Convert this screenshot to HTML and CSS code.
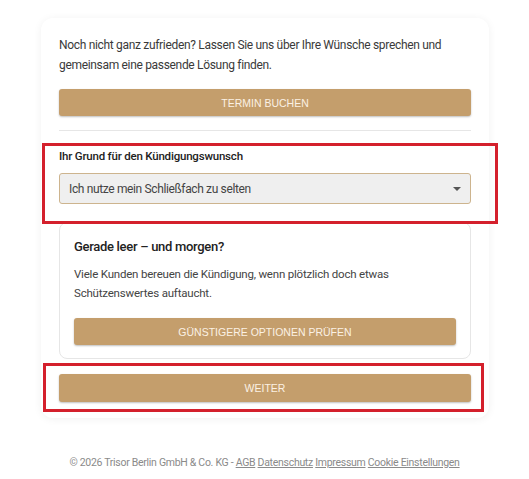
FILE: index.html
```html
<!DOCTYPE html>
<html>

<head>
    <link rel="stylesheet" href="styles.css">
    <title>Kündigung</title>
</head>

<body>
    <div id="page-wrapper">
        <div class="card">
            <p class="intro">Noch nicht ganz zufrieden? Lassen Sie uns über Ihre Wünsche sprechen und gemeinsam eine passende Lösung finden.</p>
            <button class="btn">TERMIN BUCHEN</button>
            <hr class="divider">

            <div class="field">
                <label class="field-label" for="grund">Ihr Grund für den Kündigungswunsch</label>
                <div class="select">
                    <span>Ich nutze mein Schließfach zu selten</span>
                    <span class="caret"></span>
                </div>
                <div class="mark mark-field"></div>
            </div>

            <div class="offer">
                <h4>Gerade leer – und morgen?</h4>
                <p>Viele Kunden bereuen die Kündigung, wenn plötzlich doch etwas Schützenswertes auftaucht.</p>
                <button class="btn">GÜNSTIGERE OPTIONEN PRÜFEN</button>
            </div>

            <div class="next">
                <button class="btn">WEITER</button>
                <div class="mark mark-next"></div>
            </div>
        </div>

        <footer class="footer">
            © 2026 Trisor Berlin GmbH &amp; Co. KG - <a href="#">AGB</a> <a href="#">Datenschutz</a> <a href="#">Impressum</a> <a href="#">Cookie Einstellungen</a>
        </footer>
    </div>
</body>

</html>
```

FILE: styles.css
```css
html {
    font-family: Roboto, "Liberation Sans", sans-serif;
    background: #FFFFFF;
    -webkit-font-smoothing: antialiased;
}

body {
    margin: 0;
}

#page-wrapper {
    padding-top: 18px;
}

.card {
    width: 412px;
    margin: 0 0 0 41px;
    padding: 18px 18px 16px;
    background: #FFFFFF;
    border-radius: 12px;
    box-shadow: 0 1px 8px rgba(0, 0, 0, 0.06);
    position: relative;
}

.intro {
    margin: 0;
    font-size: 12px;
    line-height: 19.5px;
    letter-spacing: -0.32px;
    color: #3a3a3a;
}

.btn {
    display: block;
    width: 100%;
    height: 27px;
    border: none;
    border-radius: 3px;
    background: #c49e6c;
    color: #fbf1e4;
    font-family: "Liberation Sans", Arial, sans-serif;
    font-size: 10.5px;
    box-shadow: 0 1px 2px rgba(0, 0, 0, 0.25);
    padding: 0;
}

.intro + .btn {
    margin-top: 14px;
}

.divider {
    border: none;
    border-top: 1px solid #e6e6e6;
    margin: 14px 0 0;
}

.field {
    position: relative;
    padding-top: 17px;
}

.field-label {
    display: block;
    font-size: 11.5px;
    line-height: 16px;
    font-weight: 500;
    letter-spacing: -0.2px;
    color: #222;
}

.select {
    margin-top: 9px;
    height: 29px;
    border: 1px solid #cdb48e;
    border-radius: 3px;
    background: #efefef;
    display: flex;
    align-items: center;
    justify-content: space-between;
    padding: 0 9px 0 9px;
    font-size: 12px;
    letter-spacing: -0.36px;
    color: #444;
}

.caret {
    width: 0;
    height: 0;
    border-left: 4px solid transparent;
    border-right: 4px solid transparent;
    border-top: 4px solid #555;
}

.offer {
    margin-top: 18px;
    border: 1px solid #e6e6e6;
    border-radius: 8px;
    padding: 14px 14px 13px;
}

.offer h4 {
    margin: 0;
    font-size: 13px;
    line-height: 20px;
    font-weight: 500;
    letter-spacing: -0.3px;
    color: #222;
}

.offer p {
    margin: 8px 0 0;
    font-size: 11.5px;
    line-height: 19px;
    letter-spacing: -0.2px;
    color: #444;
}

.offer .btn {
    margin-top: 15px;
}

.next {
    position: relative;
    margin-top: 15px;
}

.next .btn {
    height: 28px;
}

/* red highlight frames drawn over the form */
.mark {
    position: absolute;
    border: 3px solid #d4202c;
    pointer-events: none;
}

.mark-field {
    left: -17px;
    top: 12px;
    width: 450px;
    height: 75px;
}

.mark-next {
    left: -16px;
    top: -11px;
    width: 435px;
    height: 43px;
}

.footer {
    margin-top: 38px;
    text-align: center;
    font-size: 10.5px;
    letter-spacing: -0.29px;
    color: #8a8a8a;
}

.footer a {
    color: #8a8a8a;
}
```
